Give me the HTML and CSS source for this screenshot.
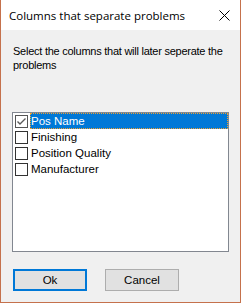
FILE: index.html
```html
<!DOCTYPE html>
<html lang="en">
<head>
    <meta charset="UTF-8">
    <title>Columns that separate problems</title>
    <link rel="stylesheet" href="styles.css">
</head>
<body>
    <div class="window">
        <div class="titlebar">
            <span class="title">Columns that separate problems</span>
            <svg class="close" width="11" height="11" viewBox="0 0 11 11">
                <path d="M0.5 0.5 L10.5 10.5 M10.5 0.5 L0.5 10.5" stroke="#000" stroke-width="1" fill="none"/>
            </svg>
        </div>
        <div class="content">
            <p class="prompt">Select the columns that will later seperate the problems</p>
            <div class="list">
                <div class="row">
                    <span class="check checked">
                        <svg width="11" height="11" viewBox="0 0 11 11">
                            <polyline points="1.5,5.5 4,8 9.5,2.5" stroke="#5a5a5a" stroke-width="1.4" fill="none"/>
                        </svg>
                    </span>
                    <span class="label selected">Pos Name</span>
                </div>
                <div class="row">
                    <span class="check"></span>
                    <span class="label">Finishing</span>
                </div>
                <div class="row">
                    <span class="check"></span>
                    <span class="label">Position Quality</span>
                </div>
                <div class="row">
                    <span class="check"></span>
                    <span class="label">Manufacturer</span>
                </div>
            </div>
            <div class="buttons">
                <button class="btn default">Ok</button>
                <button class="btn">Cancel</button>
            </div>
        </div>
    </div>
</body>
</html>
```

FILE: styles.css
```css
body {
    margin: 0;
    font-family: "Liberation Sans", Arial, sans-serif;
}
.window {
    width: 239px;
    height: 302px;
    border: 1px solid #c5714c;
    border-top: none;
    background-color: #f0f0f0;
    display: flex;
    flex-direction: column;
}
.titlebar {
    height: 30px;
    background-color: #fff;
    display: flex;
    align-items: center;
    padding-left: 8px;
    padding-right: 10px;
}
.title {
    flex: 1;
    font-family: "Open Sans", sans-serif;
    font-size: 11.5px;
    color: #000;
    padding-top: 1px;
}
.close {
    display: block;
    margin-top: 1px;
}
.content {
    flex: 1;
    padding: 0 11px;
    display: flex;
    flex-direction: column;
}
.prompt {
    margin: 14px 0 0 1px;
    font-size: 11px;
    line-height: 14px;
    letter-spacing: -0.25px;
    color: #000;
}
.list {
    margin-top: 40px;
    height: 138px;
    border: 1px solid #828790;
    background-color: #fff;
}
.row {
    height: 16px;
    display: flex;
    align-items: center;
    padding-left: 2px;
}
.check {
    width: 11px;
    height: 11px;
    border: 1px solid #333;
    background-color: #fff;
    margin-right: 2px;
    display: flex;
}
.check.checked {
    border-color: #555;
}
.label {
    flex: 1;
    height: 16px;
    line-height: 16px;
    font-size: 11.5px;
    color: #000;
    padding-left: 1px;
}
.label.selected {
    background-color: #0078d7;
    color: #fff;
    outline: 1px dotted #f0a030;
    outline-offset: -1px;
}
.buttons {
    display: flex;
    gap: 18px;
    margin-top: 17px;
    padding-left: 1px;
}
.btn {
    width: 74px;
    height: 22px;
    font-family: "Liberation Sans", Arial, sans-serif;
    font-size: 11.5px;
    color: #000;
    background-color: #e1e1e1;
    border: 1px solid #adadad;
    padding: 0;
}
.btn.default {
    border: 2px solid #0078d7;
}
```
